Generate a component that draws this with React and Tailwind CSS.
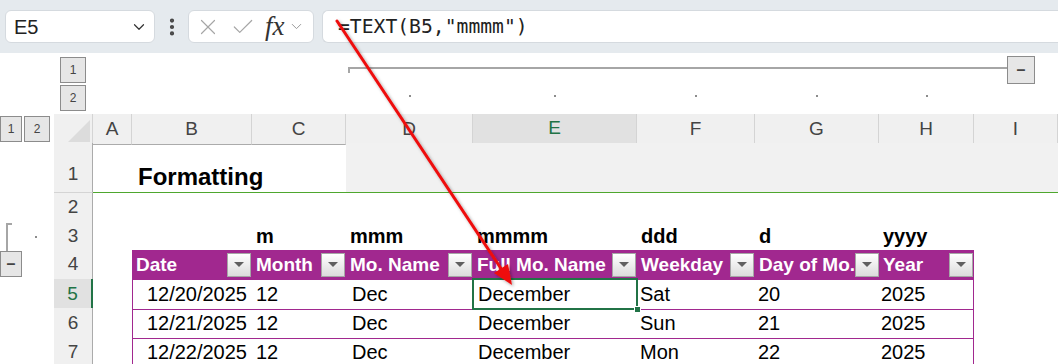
import React from 'react'
import { ChevronDown, EllipsisVertical, X, Check } from 'lucide-react'

// Column template: row header, A..I
const cols = 'grid grid-cols-[39px_39px_120px_94px_127px_164px_118px_124px_95px_1fr]'
const purple = 'bg-[#a1288f]'

const OutlineBtn = ({ label, className = '' }) => (
  <div
    className={`flex items-center justify-center bg-[#e6e6e6] border border-[#8c8c8c] text-[12px] text-[#444] ${className}`}
  >
    {label}
  </div>
)

const FilterBtn = () => (
  <div className="w-[24px] h-[24px] shrink-0 flex items-center justify-center border border-[#a6a6a6] bg-linear-to-b from-white to-[#dcdcdc]">
    <div className="w-0 h-0 border-l-[5px] border-r-[5px] border-t-[5px] border-l-transparent border-r-transparent border-t-[#606060]" />
  </div>
)

const ColHead = ({ label, active }) => (
  <div
    className={
      active
        ? 'flex items-center justify-center bg-[#e1e1e1] text-[#217346] border-r border-r-[#d4d4d4] border-b-2 border-b-[#217346]'
        : 'flex items-center justify-center bg-[#f0f0f0] text-[#444] border-r border-r-[#d4d4d4] border-b border-b-[#ababab]'
    }
  >
    {label}
  </div>
)

const RowHead = ({ n, active, className = '' }) => (
  <div
    className={
      active
        ? `flex justify-center items-center bg-[#e1e1e1] text-[#217346] border-r-2 border-r-[#217346] border-b border-b-[#d4d4d4] ${className}`
        : `flex justify-center items-center bg-[#f0f0f0] text-[#444] border-r border-r-[#ababab] border-b border-b-[#d4d4d4] ${className}`
    }
  >
    {n}
  </div>
)

const headers = ['Date', 'Month', 'Mo. Name', 'Full Mo. Name', 'Weekday', 'Day of Mo.', 'Year']

const rows = [
  { n: 5, date: '12/20/2025', day: 'Sat', d: '20' },
  { n: 6, date: '12/21/2025', day: 'Sun', d: '21' },
  { n: 7, date: '12/22/2025', day: 'Mon', d: '22' }
]

const App = () => {
  return (
    <div className="relative w-[1058px] h-[364px] overflow-hidden bg-white font-['Liberation_Sans',Arial,sans-serif]">
      {/* Formula bar */}
      <div className="h-[53px] bg-[#e5eaee] flex items-center pl-[5px] gap-0">
        <div className="w-[150px] h-[33px] bg-white border border-[#d5dadf] rounded-[6px] flex items-center justify-between pl-[8px] pr-[6px]">
          <span className="text-[20px] text-[#222]">E5</span>
          <ChevronDown size={18} strokeWidth={1.6} color="#333" />
        </div>
        <div className="w-[33px] flex justify-center">
          <EllipsisVertical size={22} strokeWidth={2.6} color="#444" />
        </div>
        <div className="w-[126px] h-[33px] bg-white border border-[#d5dadf] rounded-[6px] flex items-center pl-[6px] gap-[9px]">
          <X size={26} strokeWidth={1.1} color="#a6a6a6" />
          <Check size={26} strokeWidth={1.1} color="#a6a6a6" />
          <div className="flex items-center">
            <span className="font-['Liberation_Serif',serif] italic text-[27px] text-[#333] leading-none">fx</span>
            <ChevronDown size={17} strokeWidth={1.4} color="#999" className="ml-[3px]" />
          </div>
        </div>
        <div className="ml-[8px] flex-1 h-[33px] bg-white border border-[#d5dadf] rounded-l-[6px] border-r-0 flex items-center pl-[15px]">
          <span className="font-['DejaVu_Sans_Mono',monospace] text-[19.7px] text-[#222]">=TEXT(B5,"mmmm")</span>
        </div>
      </div>

      {/* Column outline band */}
      <div className="h-[61px] flex">
        <div className="w-[54px]" />
        <div className="w-[39px] flex flex-col items-start pl-[6px] pt-[4px] gap-[2px]">
          <OutlineBtn label="1" className="w-[26px] h-[26px]" />
          <OutlineBtn label="2" className="w-[26px] h-[26px]" />
        </div>
        <div className="flex-1 flex flex-col">
          <div className="flex items-start">
            <div className="ml-[255px] w-[659px] h-[6px] mt-[14px] border-t-2 border-l-2 border-[#a6a6a6]" />
            <OutlineBtn label="–" className="w-[28px] h-[28px] mt-[3px] text-[16px] font-bold" />
          </div>
          <div className="grid grid-cols-[39px_120px_94px_127px_164px_118px_124px_95px] mt-[11px]">
            <div />
            <div />
            <div />
            {[0, 1, 2, 3, 4].map((i) => (
              <div key={i} className="flex justify-center">
                <div className="w-[2px] h-[2px] bg-[#8c8c8c]" />
              </div>
            ))}
          </div>
        </div>
      </div>

      <div className="flex">
        {/* Row outline gutter */}
        <div className="w-[54px] flex flex-col">
          <div className="flex gap-[2px] mt-[2px]">
            <OutlineBtn label="1" className="w-[22px] h-[26px]" />
            <OutlineBtn label="2" className="w-[26px] h-[26px]" />
          </div>
          <div className="flex items-start mt-[81px]">
            <div className="ml-[6px] w-[6px] h-[28px] border-t-2 border-l-2 border-[#a6a6a6]" />
            <div className="ml-[23px] mt-[13px] w-[2px] h-[2px] bg-[#8c8c8c]" />
          </div>
          <OutlineBtn label="–" className="w-[22px] h-[26px] text-[16px] font-bold" />
        </div>

        {/* Sheet */}
        <div className="flex-1 flex flex-col text-[18px]">
          <div className={`${cols} h-[29px] text-[19px]`}>
            <div className="bg-[#f0f0f0] border-r border-r-[#d4d4d4] border-b border-b-[#ababab] flex items-end justify-end p-[2px]">
              <div className="w-0 h-0 border-l-[22px] border-l-transparent border-b-[22px] border-b-[#dcdcdc]" />
            </div>
            {['A', 'B', 'C', 'D', 'E', 'F', 'G', 'H', 'I'].map((c) => (
              <ColHead key={c} label={c} active={c === 'E'} />
            ))}
          </div>

          {/* Row 1 */}
          <div className={`${cols} h-[50px]`}>
            <RowHead n="1" className="items-end! pb-[4px] text-[19px]" />
            <div className="border-b border-b-[#4ea72e]" />
            <div className="border-b border-b-[#4ea72e] flex items-end pl-[6px] pb-[3px] text-[24px] leading-none font-bold text-black whitespace-nowrap">
              Formatting
            </div>
            <div className="border-b border-b-[#4ea72e]" />
            {[0, 1, 2, 3, 4, 5].map((i) => (
              <div key={i} className="bg-[#f1f1f1] border-b border-b-[#4ea72e]" />
            ))}
          </div>

          {/* Row 2 */}
          <div className={`${cols} h-[28px]`}>
            <RowHead n="2" className="text-[19px]" />
          </div>

          {/* Row 3 */}
          <div className={`${cols} h-[29px] font-bold text-[20px] text-black`}>
            <RowHead n="3" className="text-[19px] font-normal" />
            <div />
            <div />
            {['m', 'mmm', 'mmmm', 'ddd', 'd', 'yyyy'].map((t) => (
              <div key={t} className="flex items-end pl-[4px] pb-[1px]">{t}</div>
            ))}
          </div>

          {/* Row 4: table header */}
          <div className={`${cols} h-[29px]`}>
            <RowHead n="4" className="text-[19px]" />
            <div />
            {headers.map((h) => (
              <div
                key={h}
                className={`${purple} flex items-center justify-between pl-[4px] pr-[1px] text-white font-bold text-[19px] whitespace-nowrap overflow-hidden`}
              >
                <span>{h}</span>
                <FilterBtn />
              </div>
            ))}
          </div>

          {/* Data rows */}
          {rows.map((r) => (
            <div key={r.n} className={`${cols} h-[29px] text-[20px] text-black`}>
              <RowHead n={r.n} active={r.n === 5} className="text-[19px]" />
              <div />
              <div className="flex items-center justify-end pr-[5px] border-l border-b border-[#a1288f]">{r.date}</div>
              <div className="flex items-center pl-[4px] border-b border-[#a1288f]">12</div>
              <div className="flex items-center pl-[6px] border-b border-[#a1288f]">Dec</div>
              <div className="relative flex items-center pl-[5px] border-b border-[#a1288f]">
                December
                {r.n === 5 && (
                  <>
                    <div className="absolute -top-[1px] -left-[1px] -right-[1px] -bottom-[1px] border-2 border-[#217346]" />
                    <div className="absolute -bottom-[4px] -right-[4px] w-[7px] h-[7px] bg-[#217346] border border-white" />
                  </>
                )}
              </div>
              <div className="flex items-center pl-[3px] border-b border-[#a1288f]">{r.day}</div>
              <div className="flex items-center pl-[3px] border-b border-[#a1288f]">{r.d}</div>
              <div className="flex items-center pl-[2px] border-r border-b border-[#a1288f]">2025</div>
            </div>
          ))}
        </div>
      </div>

      {/* Annotation arrow */}
      <svg className="absolute left-0 top-0 pointer-events-none" width="1058" height="364">
        <defs>
          <filter id="sh" x="-20%" y="-20%" width="140%" height="140%">
            <feDropShadow dx="1.5" dy="1.5" stdDeviation="1.5" floodColor="#000" floodOpacity="0.35" />
          </filter>
        </defs>
        <g filter="url(#sh)">
          <line x1="337" y1="21" x2="502" y2="270" stroke="#ee1111" strokeWidth="3" strokeLinecap="round" />
          <polygon points="512,285 494,273 508,264" fill="#ee1111" />
        </g>
      </svg>
    </div>
  )
}

export default App
